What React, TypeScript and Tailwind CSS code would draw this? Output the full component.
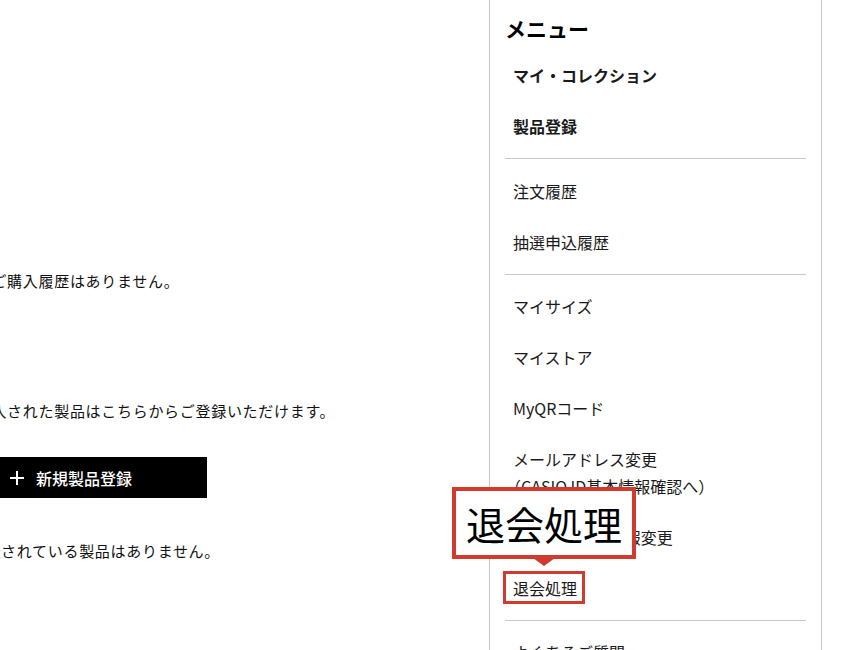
import React from 'react';

const font = { fontFamily: '"Noto Sans CJK JP", "Noto Sans", sans-serif' };

const MenuItem: React.FC<{ label: React.ReactNode; bold?: boolean }> = ({ label, bold }) => (
  <li className={`pl-[8px] py-[12px] text-[16px] leading-[27px] text-[#1a1a1a] ${bold ? 'font-bold' : ''}`}>
    {label}
  </li>
);

const Divider = () => <div className="h-px bg-[#c8c8c8]" />;

const App: React.FC = () => {
  return (
    <div className="relative w-[845px] h-[650px] overflow-hidden bg-white flex" style={font}>
      {/* Main content (cut off on the left) */}
      <main className="w-[489px] shrink-0 overflow-hidden">
        <div className="ml-[-40px] pt-[269px] flex flex-col text-[15px] leading-[24px] tracking-[0.7px] text-[#111]">
          <p>現在ご購入履歴はありません。</p>
          <p className="mt-[106px]">ご購入された製品はこちらからご登録いただけます。</p>
          <button className="mt-[34px] ml-[2px] w-[245px] h-[41px] bg-black text-white flex items-center gap-[12px] pl-[48px] tracking-normal">
            <svg width="14" height="14" viewBox="0 0 14 14" className="shrink-0">
              <path d="M7 0v14M0 7h14" stroke="white" strokeWidth="2" />
            </svg>
            <span className="text-[16px] font-medium">新規製品登録</span>
          </button>
          <p className="mt-[41px] ml-[-6px]">ご登録されている製品はありません。</p>
        </div>
      </main>

      {/* Sidebar menu */}
      <aside className="w-[333px] shrink-0 h-full border-l border-r border-[#c5c5c5] px-[15px]">
        <h2 className="pt-[14px] text-[21px] leading-[28px] font-bold text-black">メニュー</h2>
        <ul className="pt-[8px] pb-[6px]">
          <MenuItem label="マイ・コレクション" bold />
          <MenuItem label="製品登録" bold />
        </ul>
        <Divider />
        <ul className="pt-[7px] pb-[6px]">
          <MenuItem label="注文履歴" />
          <MenuItem label="抽選申込履歴" />
        </ul>
        <Divider />
        <ul className="pt-[6px] pb-[6px]">
          <MenuItem label="マイサイズ" />
          <MenuItem label="マイストア" />
          <MenuItem label="MyQRコード" />
          <MenuItem
            label={
              <>
                メールアドレス変更
                <br />
                <span className="ml-[-8px]">（CASIO ID基本情報確認へ）</span>
              </>
            }
          />
          <MenuItem label="プロフィール情報変更" />
          <MenuItem label="退会処理" />
        </ul>
        <Divider />
        <ul className="py-[6px]">
          <MenuItem label="よくあるご質問" />
        </ul>
      </aside>

      {/* Highlight callout */}
      <div className="absolute left-[452px] top-[487px] w-[184px] h-[72px] border-4 border-[#d13a2e] bg-white flex items-center justify-center">
        <span className="text-[39px] leading-none text-black">退会処理</span>
      </div>
      <svg className="absolute left-[533px] top-[558px]" width="22" height="8" viewBox="0 0 22 8">
        <path d="M0 0h22L11 8z" fill="#d13a2e" />
      </svg>
      <div className="absolute left-[503px] top-[571px] w-[82px] h-[33px] border-[3px] border-[#d13a2e]" />
    </div>
  );
};

export default App;
